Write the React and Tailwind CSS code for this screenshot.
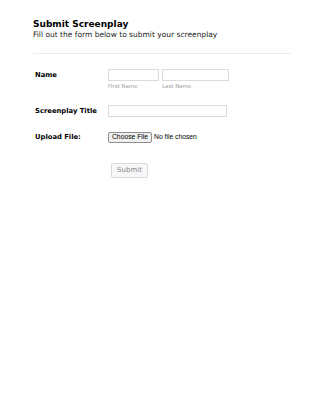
import React, { useState } from 'react';

const labelCls = 'flex w-[73px] shrink-0 items-center text-[6.8px] font-bold leading-none text-black';
const inputCls = 'h-[12px] border border-[#dcdcdc] bg-white px-1 text-[7px] outline-none';

const App = () => {
  const [first, setFirst] = useState('');
  const [last, setLast] = useState('');
  const [title, setTitle] = useState('');

  return (
    <div className="min-h-[400px] w-[325px] bg-white font-['DejaVu_Sans',Verdana,sans-serif] text-black">
      <div className="px-[33px] pt-[19px]">
        <h1 className="text-[9px] font-bold leading-[11px]">Submit Screenplay</h1>
        <p className="text-[7.5px] leading-[9px] text-[#222]">
          Fill out the form below to submit your screenplay
        </p>
        <div className="mt-[14px] h-px w-[258px] bg-[#ececec]" />

        <form className="mt-[15px] pl-[2px]" onSubmit={(e) => e.preventDefault()}>
          {/* Name */}
          <div className="flex">
            <label className={`${labelCls} h-[12px]`}>Name</label>
            <div className="flex gap-[3px]">
              <div className="flex flex-col">
                <input
                  value={first}
                  onChange={(e) => setFirst(e.target.value)}
                  className={`${inputCls} w-[51px]`}
                />
                <span className="mt-[2px] text-[5.5px] leading-[7px] text-[#a0a0a0]">First Name</span>
              </div>
              <div className="flex flex-col">
                <input
                  value={last}
                  onChange={(e) => setLast(e.target.value)}
                  className={`${inputCls} w-[67px]`}
                />
                <span className="mt-[2px] text-[5.5px] leading-[7px] text-[#a0a0a0]">Last Name</span>
              </div>
            </div>
          </div>

          {/* Screenplay title */}
          <div className="mt-[15px] flex items-center">
            <label className={labelCls}>Screenplay Title</label>
            <input
              value={title}
              onChange={(e) => setTitle(e.target.value)}
              className={`${inputCls} w-[119px]`}
            />
          </div>

          {/* Upload */}
          <div className="mt-[15px] flex items-center">
            <label className={labelCls}>Upload File:</label>
            <label className="flex cursor-pointer items-center font-['Liberation_Sans',Arial,sans-serif]">
              <span className="flex h-[11px] items-center rounded-[2px] border border-[#8f8f8f] bg-[#efefef] px-[3px] text-[6.75px] leading-none">
                Choose File
              </span>
              <span className="ml-[2px] text-[6.75px] leading-none">No file chosen</span>
              <input type="file" className="hidden" />
            </label>
          </div>

          {/* Submit */}
          <div className="mt-[20px] flex pl-[76px]">
            <button
              type="submit"
              className="block h-[15px] w-[37px] rounded-[2px] border border-[#d8d8d8] bg-[#f7f7f7] text-[7px] leading-none text-[#888]"
            >
              Submit
            </button>
          </div>
        </form>
      </div>
    </div>
  );
};

export default App;
